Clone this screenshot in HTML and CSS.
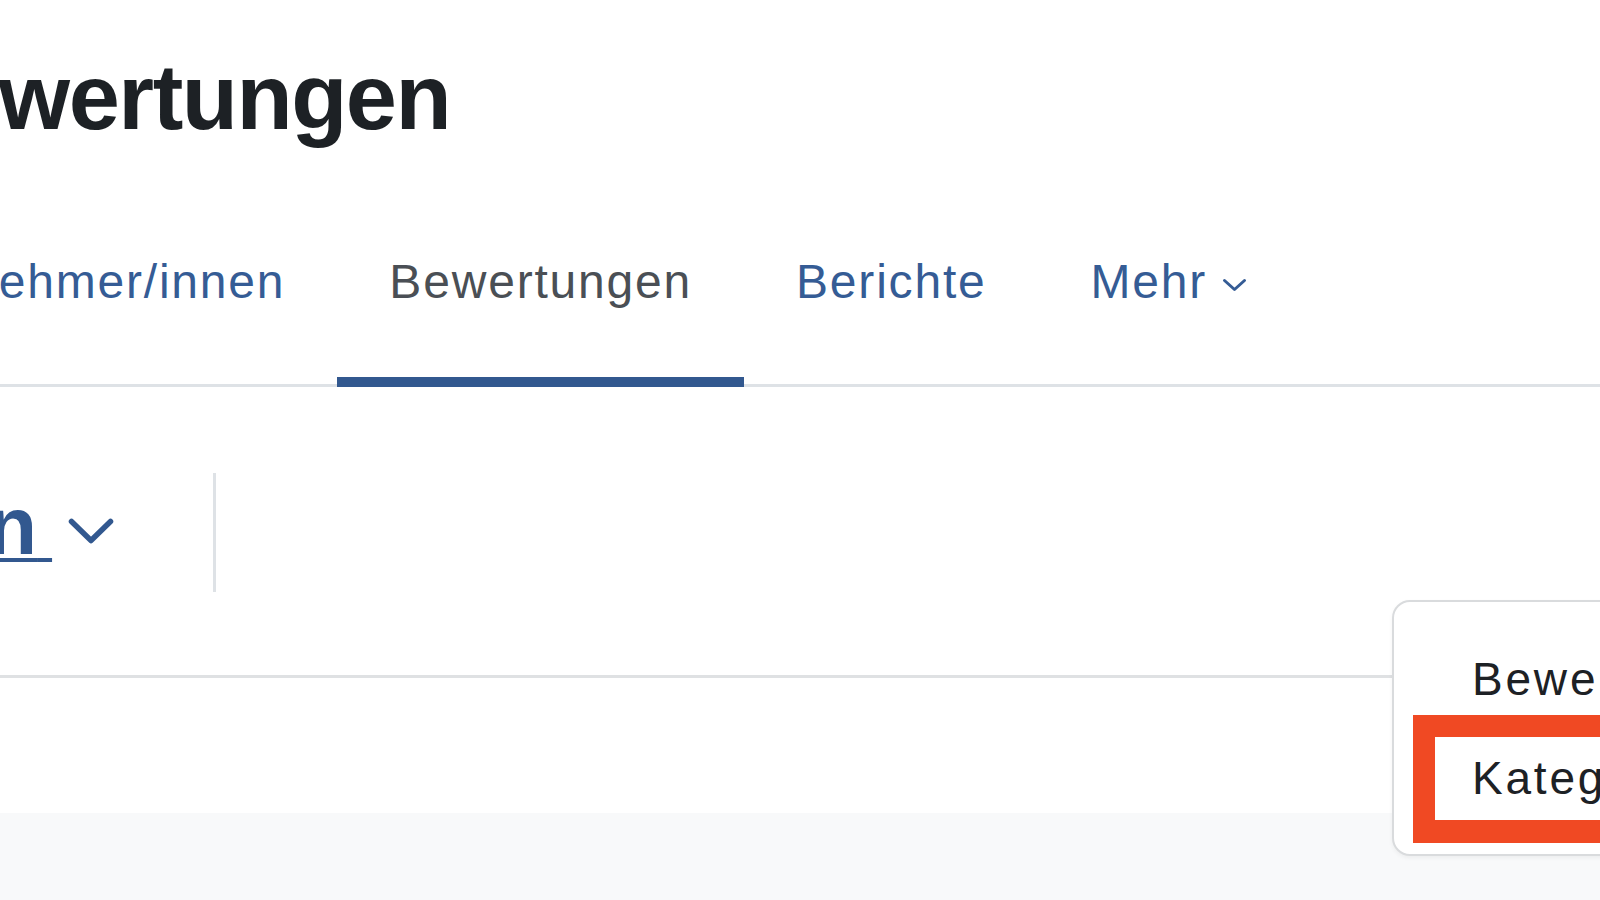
FILE: index.html
```html
<!DOCTYPE html>
<html lang="de">
<head>
<meta charset="utf-8">
<title>Setup für Bewertungen</title>
<link rel="stylesheet" href="styles.css">
</head>
<body>
<div class="page">
  <header class="page-header">
    <h1 class="page-title">Bewertungen</h1>
  </header>

  <nav class="secondary-nav">
    <ul class="tabs">
      <li class="tab-item"><a class="tab" href="#">Teilnehmer/innen</a></li>
      <li class="tab-item"><a class="tab active" href="#">Bewertungen</a></li>
      <li class="tab-item"><a class="tab" href="#">Berichte</a></li>
      <li class="tab-item"><a class="tab" href="#">Mehr<svg class="tab-caret" width="25" height="14" viewBox="0 0 25 14"><polyline points="2.5,2.5 12.5,11.5 22.5,2.5" fill="none" stroke="currentColor" stroke-width="3" stroke-linecap="round" stroke-linejoin="round"/></svg></a></li>
    </ul>
  </nav>

  <div class="tertiary">
    <div class="select-wrap">
      <a class="select-link" href="#"><span class="select-label">Setup für Bewertungen<span class="trail">&nbsp;</span></span><svg class="select-caret" width="46" height="26" viewBox="0 0 46 26"><polyline points="3.5,3.5 23,22.5 42.5,3.5" fill="none" stroke="currentColor" stroke-width="5.5" stroke-linecap="round" stroke-linejoin="round"/></svg></a>
    </div>
  </div>

  <main class="content"></main>
</div>

<div class="menu">
  <a class="menu-item" href="#">Bewertungsaspekt hinzufügen</a>
  <a class="menu-item" href="#">Kategorie hinzufügen</a>
</div>
<div class="annotation"></div>
</body>
</html>
```

FILE: styles.css
```css
html, body {
  margin: 0;
  height: 100%;
  overflow: hidden;
  background: #ffffff;
  font-family: "Liberation Sans", Arial, Helvetica, sans-serif;
}

.page {
  margin-left: -116px;
  min-height: 100vh;
  display: flex;
  flex-direction: column;
}

/* Page heading */
.page-header {
  padding-top: 42px;
}

.page-title {
  margin: 0;
  font-size: 92px;
  line-height: 110px;
  font-weight: 700;
  letter-spacing: -1.5px;
  color: #1d2125;
  white-space: nowrap;
}

/* Secondary navigation tabs */
.secondary-nav {
  margin-left: -45px;
  border-bottom: 3px solid #dee2e6;
}

.tabs {
  display: flex;
  list-style: none;
  margin: 0;
  padding: 0;
}

.tab-item {
  display: block;
}

.tab {
  display: block;
  padding: 101px 52px 66px;
  margin-bottom: -3px;
  font-size: 48px;
  line-height: 58px;
  letter-spacing: 1.8px;
  color: #355c95;
  text-decoration: none;
  white-space: nowrap;
  border-bottom: 10px solid transparent;
}

.tab.active {
  color: #4a4f55;
  border-bottom-color: #32588f;
}

.tab-caret {
  vertical-align: middle;
  margin-left: 15px;
}

/* Tertiary navigation */
.tertiary {
  margin-left: -749px;
  padding: 86px 0 83px;
  margin-bottom: 135px;
  border-bottom: 3px solid #dfe1e3;
}

.select-wrap {
  display: flex;
  align-items: center;
  height: 115px;
  padding-bottom: 4px;
  padding-right: 99px;
  border-right: 3px solid #dee2e6;
  width: max-content;
}

.select-link {
  display: flex;
  align-items: center;
  color: #32588f;
  text-decoration: none;
}

.select-label {
  font-size: 82px;
  line-height: 82px;
  font-weight: 700;
  white-space: nowrap;
  text-decoration: underline;
  text-decoration-thickness: 4px;
  text-underline-offset: 4px;
}

.trail {
  font-size: 54px;
}

.select-caret {
  margin-left: 16px;
}

/* Page body */
.content {
  flex: 1;
  background: #f8f9fa;
}

/* Dropdown menu */
.menu {
  position: absolute;
  left: 1392px;
  top: 600px;
  width: 700px;
  padding: 27px 0;
  background: #ffffff;
  border: 2px solid #d9dbdd;
  border-radius: 18px;
  box-shadow: 0 2px 4px rgba(0, 0, 0, 0.05);
}

.menu-item {
  display: block;
  padding: 18.5px 0 18.5px 78px;
  font-size: 46px;
  line-height: 62px;
  letter-spacing: 2.8px;
  color: #1d2125;
  text-decoration: none;
  white-space: nowrap;
}

/* Screenshot annotation */
.annotation {
  position: absolute;
  left: 1413px;
  top: 715px;
  width: 400px;
  height: 128px;
  box-sizing: border-box;
  border: 22px solid #f04923;
  border-bottom-width: 23px;
}
```
